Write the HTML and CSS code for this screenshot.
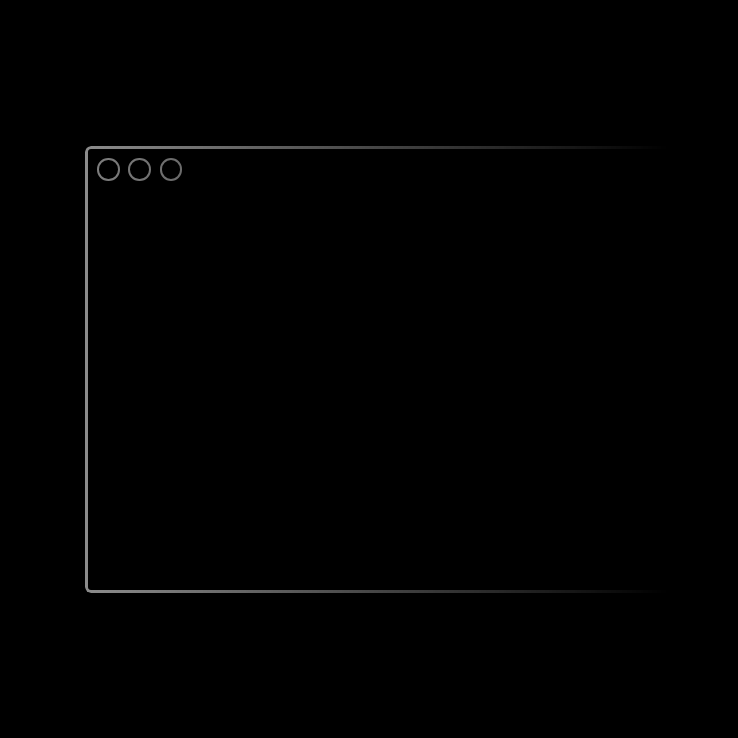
FILE: index.html
```html
<!DOCTYPE html>
<html>
<head>
<meta charset="utf-8">
<link rel="stylesheet" href="styles.css">
</head>
<body>
<div class="stage">
  <div class="window">
    <div class="dots">
      <span class="dot"></span>
      <span class="dot"></span>
      <span class="dot"></span>
    </div>
  </div>
</div>
</body>
</html>
```

FILE: styles.css
```css
html, body {
  margin: 0;
  padding: 0;
  background: #000;
  width: 738px;
  height: 738px;
  overflow: hidden;
}
.stage {
  padding: 146px 0 0 85px;
}
.window {
  box-sizing: border-box;
  width: 600px;
  height: 447px;
  border: 3px solid #8c8c8c;
  border-right: none;
  border-radius: 6px 0 0 6px;
  padding: 9.3px 9px;
  -webkit-mask-image: linear-gradient(to right, #000 0%, rgba(0,0,0,0) 97%);
  mask-image: linear-gradient(to right, #000 0%, rgba(0,0,0,0) 97%);
}
.dots {
  display: flex;
  gap: 8.8px;
}
.dot {
  box-sizing: border-box;
  width: 22.5px;
  height: 22.5px;
  border: 2.8px solid #808080;
  border-radius: 50%;
}
```
